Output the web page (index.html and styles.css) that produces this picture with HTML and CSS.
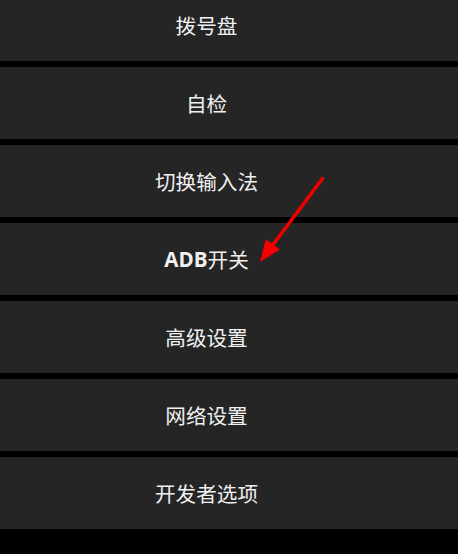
FILE: index.html
```html
<!DOCTYPE html>
<html lang="zh-CN">
<head>
<meta charset="utf-8">
<title>菜单</title>
<link rel="stylesheet" href="styles.css">
</head>
<body>
<div class="menu">
  <div class="item">拨号盘</div>
  <div class="item">自检</div>
  <div class="item">切换输入法</div>
  <div class="item"><span class="latin">ADB</span>开关</div>
  <div class="item">高级设置</div>
  <div class="item">网络设置</div>
  <div class="item">开发者选项</div>
</div>
<svg class="arrow" width="458" height="554" viewBox="0 0 458 554">
  <line x1="322.5" y1="178.5" x2="272" y2="246" stroke="#f20000" stroke-width="3.5" stroke-linecap="round"/>
  <polygon points="260,262 265.8,239 280,249.6" fill="#f20000"/>
</svg>
</body>
</html>
```
FILE: styles.css
```css
html, body {
  margin: 0;
  padding: 0;
  background: #000;
}
body {
  position: relative;
  width: 458px;
  height: 554px;
  overflow: hidden;
  font-family: "Noto Sans CJK SC", "Noto Sans", sans-serif;
}
.menu {
  display: flex;
  flex-direction: column;
  gap: 6px;
  margin-top: -11px;
}
.item {
  height: 72px;
  background: #252525;
  color: #f0f0f0;
  font-size: 20.6px;
  display: flex;
  align-items: center;
  justify-content: center;
  padding-right: 45px;
}
.latin {
  font-family: "Open Sans", "Noto Sans", sans-serif;
  font-weight: 700;
}
.arrow {
  position: absolute;
  left: 0;
  top: 0;
}
```
